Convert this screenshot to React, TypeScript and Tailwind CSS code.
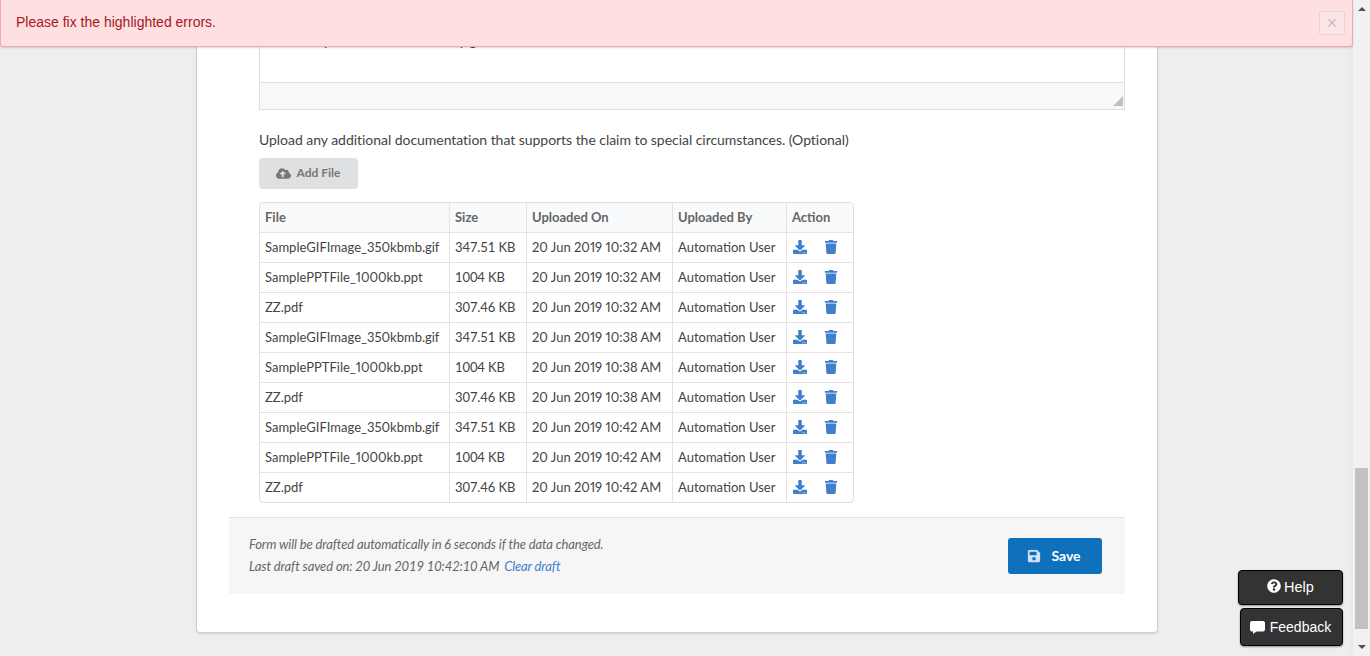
import { FaCloudUploadAlt, FaDownload, FaTrash, FaSave, FaQuestionCircle } from "react-icons/fa";

const dates = ["10:32", "10:38", "10:42"];
const files = [
  ["SampleGIFImage_350kbmb.gif", "347.51 KB"],
  ["SamplePPTFile_1000kb.ppt", "1004 KB"],
  ["ZZ.pdf", "307.46 KB"],
];
const rows = dates.flatMap((t) => files.map((f) => ({ name: f[0], size: f[1], when: `20 Jun 2019 ${t} AM` })));

const td = "h-[30px] px-[5px] border-t border-l border-[#e3e3e3] first:border-l-0 whitespace-nowrap";
const th = "h-[29px] px-[5px] border-l border-[#e3e3e3] first:border-l-0 font-bold text-left text-[#666] bg-[#f9fafb] whitespace-nowrap";

export default function App() {
  return (
    <div className="relative flex h-[656px] w-[1370px] overflow-hidden bg-[#eeeeee] font-['Lato',sans-serif] text-[13px] text-[#444] proportional-nums">
      <main className="flex-1 flex flex-col justify-end items-center pb-[23px]">
        <section className="w-[962px] ml-[1px] bg-white rounded-b-[4px] border border-t-0 border-[#cfcfcf] shadow-[0_1px_2px_rgba(0,0,0,0.12)] pl-[32px] pr-[32px] pb-[38px]">
          <div className="pl-[30px]">
            <div className="h-[110px] w-[866px] border border-t-0 border-[#dedede] flex flex-col">
              <div className="flex-1 overflow-hidden bg-white pt-[31px] pl-[12px] text-[14px] leading-[20px]">
                The story was told to the family go
              </div>
              <div className="relative h-[27px] bg-[#f8f9fa] border-t border-[#dedede]">
                <span className="absolute right-[1px] bottom-[3px] w-0 h-0 border-l-[10px] border-l-transparent border-b-[10px] border-b-[#c0c0c0]" />
              </div>
            </div>
            <p className="mt-[20px] text-[14px] leading-[20px] tracking-[-0.04px] text-[#444]">
              Upload any additional documentation that supports the claim to special circumstances. (Optional)
            </p>
            <button className="mt-[8px] h-[31px] w-[99px] rounded-[4px] bg-[#dfe0e2] text-[#777] text-[12px] font-bold flex items-center justify-center gap-[6px] pr-[1px] pb-[1px]">
              <FaCloudUploadAlt className="text-[15px] text-[#777]" />
              Add File
            </button>
            <div className="mt-[13px] w-[595px] rounded-[4px] border border-[#dedede] overflow-hidden">
              <table className="w-full border-separate border-spacing-0 table-fixed">
                <colgroup>
                  <col className="w-[189px]" />
                  <col className="w-[77px]" />
                  <col className="w-[146px]" />
                  <col className="w-[114px]" />
                  <col />
                </colgroup>
                <thead>
                  <tr>
                    <th className={th}>File</th>
                    <th className={th}>Size</th>
                    <th className={th}>Uploaded On</th>
                    <th className={th}>Uploaded By</th>
                    <th className={th}>Action</th>
                  </tr>
                </thead>
                <tbody>
                  {rows.map((r, i) => (
                    <tr key={i}>
                      <td className={td}>{r.name}</td>
                      <td className={td}>
                        <span className="tabular-nums tracking-[-0.1px]">{r.size}</span>
                      </td>
                      <td className={td}>{r.when}</td>
                      <td className={td}>Automation User</td>
                      <td className={td}>
                        <div className="flex items-center gap-[17px] text-[#3f7fcb] pl-[1px] pb-[2px]">
                          <FaDownload className="text-[14px]" />
                          <FaTrash className="text-[14px]" />
                        </div>
                      </td>
                    </tr>
                  ))}
                </tbody>
              </table>
            </div>
          </div>
          <footer className="mt-[14px] h-[77px] bg-[#f6f6f6] border-t border-[#e3e3e3] flex items-center justify-between pl-[20px] pr-[23px]">
            <div className="italic text-[13px] tracking-[-0.12px] leading-[22px] text-[#666] pb-[2px]">
              <div>Form will be drafted automatically in 6 seconds if the data changed.</div>
              <div className="tabular-nums">
                Last draft saved on: 20 Jun 2019 10:42:10 AM <a className="ml-[2px] text-[#3f7fcb]">Clear draft</a>
              </div>
            </div>
            <button className="h-[36px] w-[94px] rounded-[3px] bg-[#0f70bc] text-white font-bold text-[14px] flex items-center justify-center gap-[10px] pr-[2px] pb-[1px]">
              <FaSave className="text-[14px] text-[#cfe3f5]" />
              Save
            </button>
          </footer>
        </section>
      </main>

      <aside className="w-[17px] bg-[#f1f1f1] flex flex-col items-center shadow-[-2px_0_6px_rgba(0,0,0,0.03)]">
        <span className="mt-[7px] w-0 h-0 border-x-[4px] border-x-transparent border-b-[4px] border-b-[#505050]" />
        <div className="mt-auto mb-[16px] w-[13px] h-[161px] bg-[#c1c1c1]" />
        <span className="mb-[7px] w-0 h-0 border-x-[4px] border-x-transparent border-t-[4px] border-t-[#505050]" />
      </aside>

      <div className="absolute top-0 left-0 w-[1353px] h-[47px] bg-[#ffe0e1] border border-t-0 border-[#f2a9a9] rounded-b-[3px] shadow-[0_1px_2px_rgba(0,0,0,0.15)] flex items-center justify-between pl-[15px] pr-[7px] font-['Liberation_Sans',sans-serif] text-[14px] text-[#a9151f]">
        <span className="-mt-[2px]">Please fix the highlighted errors.</span>
        <button className="w-[26px] h-[24px] border border-[#f0d0d2] bg-[#fbe6e7] rounded-[2px] text-[#d9b5b8] text-[18px] leading-none flex items-center justify-center">×</button>
      </div>

      <div className="absolute right-[27px] bottom-[51px] w-[105px] h-[35px] bg-[#333] border border-black rounded-[4px] shadow-[0_1px_2px_rgba(0,0,0,0.4)] flex items-center justify-center gap-[3px] text-white font-['Liberation_Sans',sans-serif] text-[14.5px]">
        <FaQuestionCircle className="text-[14px] -mt-[3px]" />
        Help
      </div>
      <div className="absolute right-[27px] bottom-[10px] w-[103px] h-[38px] bg-[#333] border border-black rounded-[4px] shadow-[0_1px_2px_rgba(0,0,0,0.4)] flex items-center justify-center gap-[5px] pr-[2px] text-white font-['Liberation_Sans',sans-serif] text-[14px]">
        <svg width="15" height="13" viewBox="0 0 15 13" fill="currentColor" className="mt-[1px]">
          <path d="M2 0h11a2 2 0 0 1 2 2v6.5a2 2 0 0 1-2 2H6.5L3 13v-2.5H2a2 2 0 0 1-2-2V2a2 2 0 0 1 2-2z" />
        </svg>
        Feedback
      </div>
    </div>
  );
}
